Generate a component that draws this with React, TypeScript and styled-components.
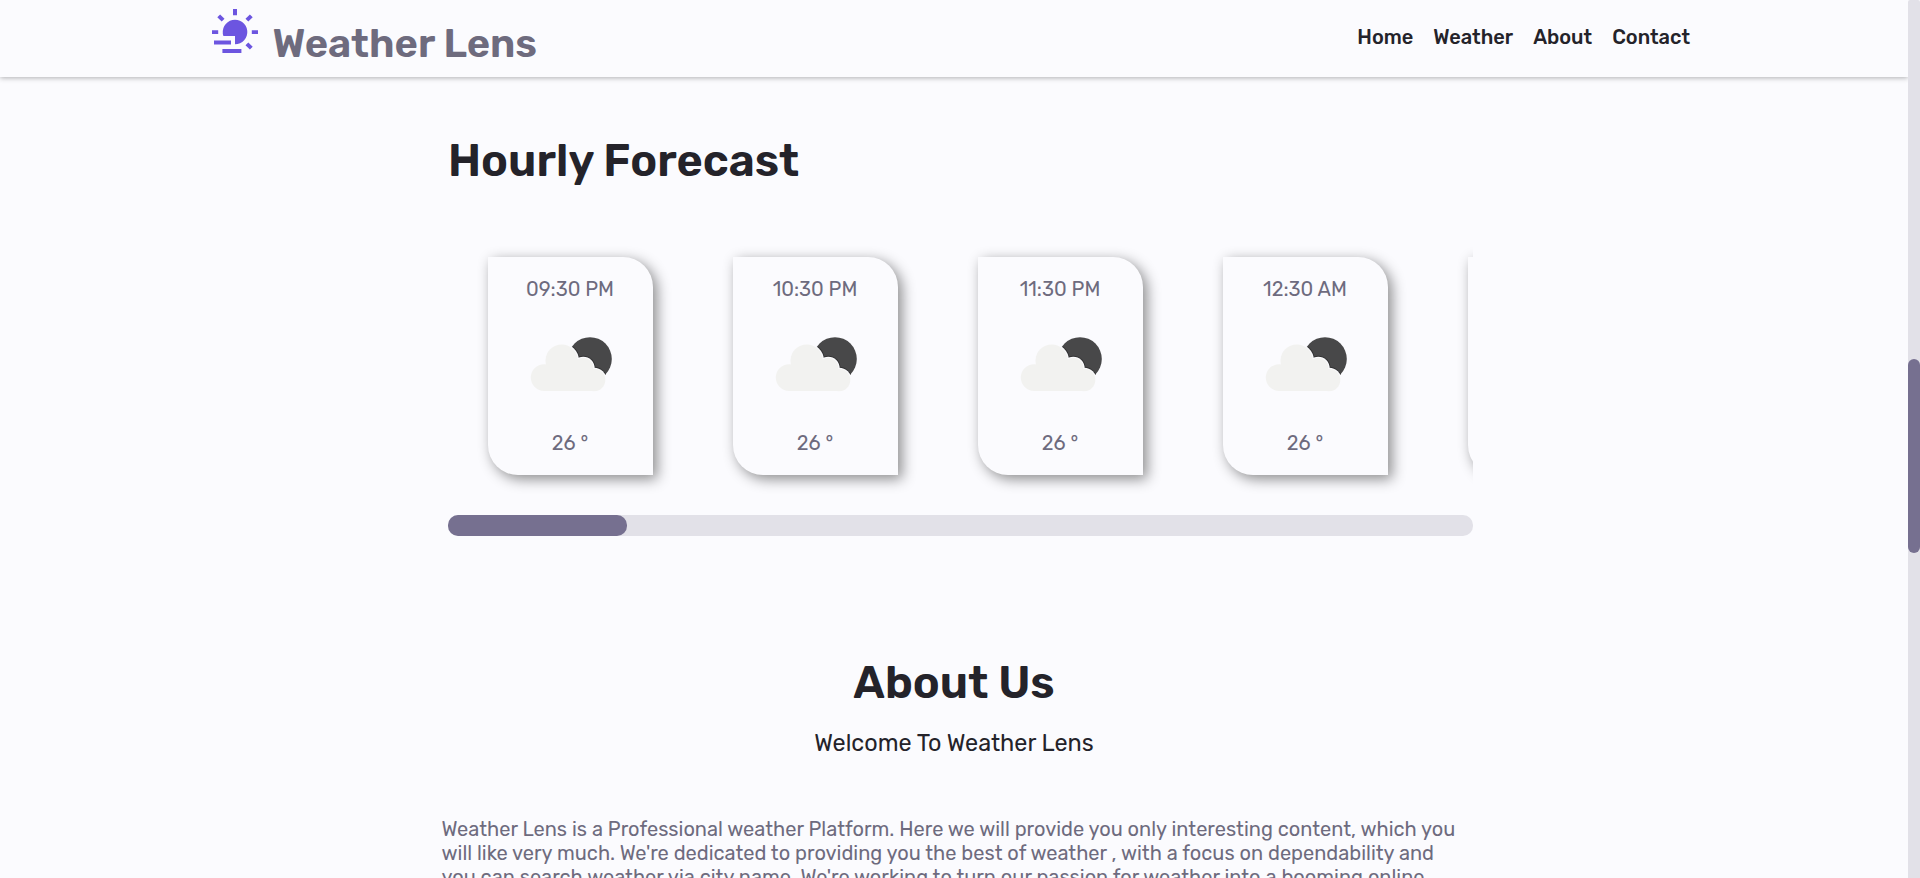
import React from "react";
import styled, { createGlobalStyle } from "styled-components";

const colors = {
  page: "#fbfbfe",
  ink: "#24232a",
  muted: "#6e6b7e",
  accent: "#6c55e0",
  thumb: "#767090",
  track: "#e2e1e8",
};

const GlobalStyle = createGlobalStyle`
  * { box-sizing: border-box; margin: 0; padding: 0; }
  html, body { height: 100%; overflow: hidden; background: ${colors.page}; }
  body { font-family: Rubik, Roboto, "Liberation Sans", sans-serif; }
  #root { height: 100%; }
`;

const Shell = styled.div`
  display: flex;
  height: 878px;
  overflow: hidden;
  background: ${colors.page};
`;

const Viewport = styled.div`
  flex: 1;
  min-width: 0;
  overflow: hidden;
`;

const PageTrack = styled.div`
  width: 12px;
  padding-top: 359px;
  border-radius: 2px 2px 0 0;
  background: ${colors.track};
`;

const PageThumb = styled.div`
  height: 194px;
  border-radius: 6px;
  background: ${colors.thumb};
`;

const Header = styled.header`
  display: flex;
  justify-content: space-between;
  height: 77px;
  padding: 0 218px 0 208px;
  box-shadow: 0 1px 5px rgba(0, 0, 0, 0.3);
`;

const Brand = styled.a`
  display: flex;
  color: ${colors.muted};
`;

const BrandIcon = styled.svg`
  width: 54px;
  height: 60px;
`;

const BrandName = styled.span`
  margin: 20px 0 0 10.5px;
  font-size: 40px;
  font-weight: 600;
  line-height: 48px;
`;

const Nav = styled.nav`
  display: flex;
  gap: 20px;
  padding-top: 25px;
`;

const NavLink = styled.a`
  color: ${colors.ink};
  font-size: 20px;
  font-weight: 500;
  line-height: 24px;
  white-space: nowrap;
`;

const Forecast = styled.section`
  width: 1025px;
  margin: 58px 0 0 448px;
`;

const Title = styled.h2`
  color: ${colors.ink};
  font-size: 44.9px;
  font-weight: 600;
  line-height: 52px;
`;

const Scroller = styled.div`
  display: flex;
  gap: 80px;
  height: 328px;
  padding: 70px 40px 0;
  overflow: hidden;
`;

const Card = styled.article`
  display: flex;
  flex: 0 0 165px;
  flex-direction: column;
  align-items: center;
  height: 218px;
  padding: 20px 1px 0 0;
  border-radius: 0 30px 0 30px;
  background: ${colors.page};
  box-shadow: 4px 4px 14px rgba(0, 0, 0, 0.45);
`;

const Reading = styled.p`
  color: ${colors.muted};
  font-size: 20px;
  line-height: 24px;
`;

const CloudIcon = styled.svg`
  width: 90px;
  height: 90px;
  margin: 20px 0;
`;

const ScrollTrack = styled.div`
  height: 21px;
  border-radius: 10px;
  background: ${colors.track};
`;

const ScrollThumb = styled.div`
  width: 179px;
  height: 21px;
  border-radius: 10px;
  background: ${colors.thumb};
`;

const About = styled.section`
  display: flex;
  flex-direction: column;
  align-items: center;
  margin-top: 121px;
`;

const Subtitle = styled.p`
  margin-top: 19px;
  color: ${colors.ink};
  font-size: 23.4px;
  line-height: 30px;
`;

const Copy = styled.p`
  width: 1025px;
  margin-top: 59px;
  color: ${colors.muted};
  font-size: 20px;
  line-height: 24px;
`;

const Line = styled.span`
  display: block;
  white-space: nowrap;
`;

const links = ["Home", "Weather", "About", "Contact"];

const hours = ["09:30 PM", "10:30 PM", "11:30 PM", "12:30 AM", "01:30 AM"];

const copy = [
  "Weather Lens is a Professional weather Platform. Here we will provide you only interesting content, which you",
  "will like very much. We're dedicated to providing you the best of weather , with a focus on dependability and",
  "you can search weather via city name. We're working to turn our passion for weather into a booming online",
];

function SunFog() {
  return (
    <BrandIcon viewBox="208 0 54 60" fill={colors.accent}>
      <path d="M223.4 36A12.3 12.3 0 1 1 235 44.3V36Z" />
      <path d="M233 9h4v6.2h-4zM212 30.2h6.2v3.8H212zM251.8 30.2h6.2v3.8h-6.2zM214 40.5h17v4h-17zM222.4 49h19v3.9h-19z" />
      <path
        d="M218.7 15.8l4.4 4.4M251.3 15.8l-4.4 4.4M246.9 43.8l4.4 4.4"
        stroke={colors.accent}
        strokeWidth="4"
      />
    </BrandIcon>
  );
}

/* The cloud is a union of four puffs over a flat base; `grow` widens every puff. */
function Puffs({ grow = 0 }: { grow?: number }) {
  return (
    <>
      <circle cx="43.7" cy="56.6" r={13.4 + grow} />
      <circle cx="61.2" cy="39.7" r={16.2 + grow} />
      <circle cx="82.8" cy="47" r={10.2 + grow} />
      <circle cx="93.6" cy="59" r={11.2 + grow} />
      <path d="M43.7 70V50L61 40l22 8 11 10v12z" />
    </>
  );
}

function CloudyNight() {
  return (
    <CloudIcon viewBox="24.5 0 90 90">
      <clipPath id="moon">
        <circle cx="89.5" cy="38" r="21.8" />
      </clipPath>
      <circle cx="89.5" cy="38" r="21.8" fill="#484849" />
      <g clipPath="url(#moon)" fill="#303031">
        <Puffs grow={2} />
      </g>
      <g fill={colors.page}>
        <Puffs grow={1.1} />
      </g>
      <g fill="#f2f2f0">
        <Puffs />
      </g>
    </CloudIcon>
  );
}

export default function App() {
  return (
    <>
      <GlobalStyle />
      <Shell>
        <Viewport>
          <Header>
            <Brand>
              <SunFog />
              <BrandName>Weather Lens</BrandName>
            </Brand>
            <Nav>
              {links.map((l) => (
                <NavLink key={l}>{l}</NavLink>
              ))}
            </Nav>
          </Header>
          <Forecast>
            <Title>Hourly Forecast</Title>
            <Scroller>
              {hours.map((h) => (
                <Card key={h}>
                  <Reading>{h}</Reading>
                  <CloudyNight />
                  <Reading>26 °</Reading>
                </Card>
              ))}
            </Scroller>
            <ScrollTrack>
              <ScrollThumb />
            </ScrollTrack>
          </Forecast>
          <About>
            <Title>About Us</Title>
            <Subtitle>Welcome To Weather Lens</Subtitle>
            <Copy>
              {copy.map((line) => (
                <Line key={line}>{line}</Line>
              ))}
            </Copy>
          </About>
        </Viewport>
        <PageTrack>
          <PageThumb />
        </PageTrack>
      </Shell>
    </>
  );
}
